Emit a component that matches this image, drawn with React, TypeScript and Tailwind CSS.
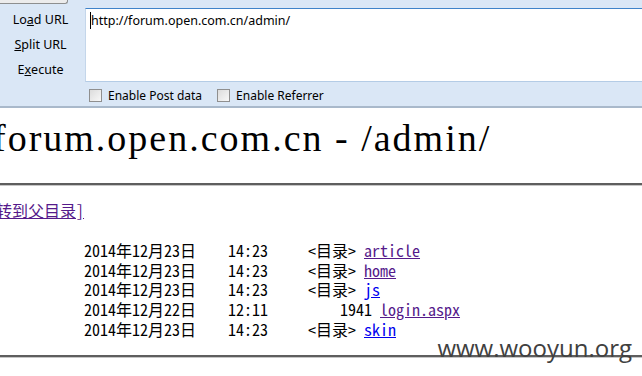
import React from 'react';

interface Entry {
  date: string;
  time: string;
  size?: string;
  name: string;
  visited: boolean;
}

const entries: Entry[] = [
  { date: '2014年12月23日', time: '14:23', name: 'article', visited: true },
  { date: '2014年12月23日', time: '14:23', name: 'home', visited: true },
  { date: '2014年12月23日', time: '14:23', name: 'js', visited: false },
  { date: '2014年12月22日', time: '12:11', size: '1941', name: 'login.aspx', visited: true },
  { date: '2014年12月23日', time: '14:23', name: 'skin', visited: false },
];

const uiFont = "font-['Noto_Sans','Open_Sans',sans-serif]";
const monoFont = "font-['Noto_Sans_Mono_CJK_SC','Liberation_Mono','Noto_Sans_CJK_SC',monospace]";

function Checkbox({ label }: { label: string }) {
  return (
    <label className="flex items-center gap-[6px]">
      <span className="size-[13px] border border-[#8f8f8f] bg-gradient-to-br from-[#dcdcdc] to-[#f8f8f8]" />
      <span className="text-[12px] text-black">{label}</span>
    </label>
  );
}

function Toolbar() {
  return (
    <div className={`relative h-[108px] border-b-2 border-[#a9b9cb] bg-[#dae7f6] pt-[8px] ${uiFont}`}>
      <div className="absolute left-0 top-0 h-[4px] w-[68px] rounded-br-[3px] border-b border-r border-[#8e8f8f] bg-[#ececec]" />
      <div className="flex">
        <div className="flex w-[85px] flex-col pr-[4px] text-[12.5px] text-black">
          <div className="flex h-[25px] items-center justify-center">
            Lo<span className="underline">a</span>d URL
          </div>
          <div className="flex h-[25px] items-center justify-center">
            <span className="underline">S</span>plit URL
          </div>
          <div className="flex h-[25px] items-center justify-center">
            E<span className="underline">x</span>ecute
          </div>
        </div>
        <div className="h-[74px] flex-1 border-l border-t border-b border-l-[#c4d6ea] border-t-[#3f83c9] border-b-[#b4cce6] bg-white pl-[4px] pt-[3px] text-[12.5px] text-black">
          <span className="border-l border-black">http://forum.open.com.cn/admin/</span>
        </div>
      </div>
      <div className="flex h-[25px] items-center gap-[15px] pl-[89px]">
        <Checkbox label="Enable Post data" />
        <Checkbox label="Enable Referrer" />
      </div>
    </div>
  );
}

function Rule() {
  return <div className="h-[3px] border-t-2 border-b border-t-[#5e5e5e] border-b-[#c6c6c6]" />;
}

function Row({ entry }: { entry: Entry }) {
  const linkColor = entry.visited ? 'text-[#551a8b]' : 'text-[#0000ee]';
  return (
    <div className="flex h-[19.75px] items-center whitespace-pre">
      <span className="w-[144px]">{entry.date}</span>
      <span className="w-[80px]">{entry.time}</span>
      {entry.size ? (
        <span className="w-[72px] pr-[8px] text-right">{entry.size}</span>
      ) : (
        <span className="w-[56px]">&lt;目录&gt;</span>
      )}
      <a href="#" className={`underline ${linkColor}`}>
        {entry.name}
      </a>
    </div>
  );
}

export default function App() {
  return (
    <div className="relative h-[376px] w-[642px] overflow-hidden bg-white">
      <Toolbar />
      <h1 className="ml-[-7px] mt-[10px] h-[40px] whitespace-pre font-['Liberation_Serif','Noto_Serif',serif] text-[38px] leading-[40px] tracking-[2px] text-black">
        forum.open.com.cn - /admin/
      </h1>
      <div className="mt-[25px]">
        <Rule />
      </div>
      <div className={`ml-[-12px] mt-[14px] h-[20px] text-[16px] leading-[20px] ${monoFont}`}>
        <a href="#" className="text-[#551a8b] underline">
          [转到父目录]
        </a>
      </div>
      <div className={`mt-[20px] pl-[84px] text-[16px] text-black ${monoFont}`}>
        {entries.map((e) => (
          <Row key={e.name} entry={e} />
        ))}
      </div>
      <div className="mt-[16px]">
        <Rule />
      </div>
      <div className="absolute bottom-[16px] right-[10px] font-['Open_Sans',sans-serif] text-[24px] leading-none text-[#404040]">
        www.wooyun.org
      </div>
    </div>
  );
}
